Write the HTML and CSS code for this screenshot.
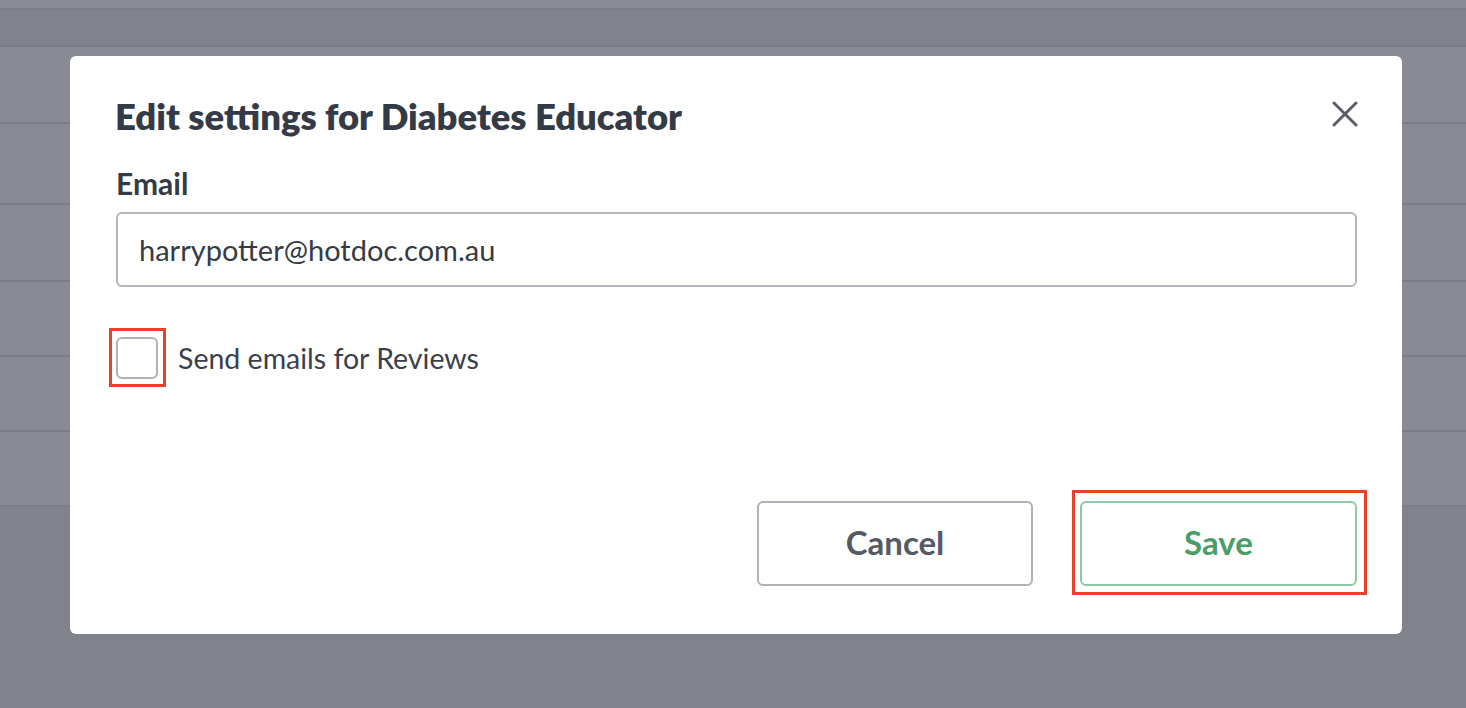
FILE: index.html
```html
<!DOCTYPE html>
<html lang="en">
<head>
<meta charset="utf-8">
<title>Edit settings</title>
<link rel="stylesheet" href="styles.css">
</head>
<body>
<div class="bg">
  <div class="bg-top"></div>
  <div class="bg-head"></div>
  <div class="bg-row r1"></div>
  <div class="bg-row r2"></div>
  <div class="bg-row r3"></div>
  <div class="bg-row r4"></div>
  <div class="bg-row r5"></div>
  <div class="bg-row r6"></div>
  <div class="bg-foot"></div>
</div>
<div class="modal">
  <div class="modal-header">
    <h1 class="title">Edit settings for Diabetes Educator</h1>
    <button class="close" aria-label="Close">
      <svg width="26" height="26" viewBox="0 0 26 26"><path d="M2 2 L24 24 M24 2 L2 24" stroke="#5a5e69" stroke-width="3" stroke-linecap="round" fill="none"/></svg>
    </button>
  </div>
  <label class="label">Email</label>
  <div class="input">harrypotter@hotdoc.com.au</div>
  <div class="check-row">
    <span class="check-hl"><span class="checkbox"></span></span>
    <span class="check-label">Send emails for Reviews</span>
  </div>
  <div class="actions">
    <button class="btn btn-cancel">Cancel</button>
    <span class="save-hl"><button class="btn btn-save">Save</button></span>
  </div>
</div>
</body>
</html>
```
FILE: styles.css
```css
* { box-sizing: border-box; }
html, body { margin: 0; padding: 0; }
body {
  width: 1466px;
  height: 708px;
  overflow: hidden;
  font-family: Lato, "Open Sans", sans-serif;
  background: #80838c;
  position: relative;
}
.bg { display: flex; flex-direction: column; }
.bg-top { height: 10px; background: #898c95; border-bottom: 2px solid #7a7d86; }
.bg-head { height: 37px; background: #80838c; border-bottom: 2px solid #7a7d86; }
.bg-row { background: #888b94; border-bottom: 2px solid #7b7e87; }
.r1 { height: 77px; }
.r2 { height: 81px; }
.r3 { height: 77px; }
.r4 { height: 75px; }
.r5 { height: 75px; }
.r6 { height: 75px; }
.bg-foot { flex: 1; }

.modal {
  position: absolute;
  left: 70px;
  top: 56px;
  width: 1332px;
  height: 578px;
  background: #fff;
  border-radius: 6px;
  padding: 38px 45px 0 46px;
  display: flex;
  flex-direction: column;
  color: #343a46;
}
.modal-header {
  display: flex;
  justify-content: space-between;
  align-items: flex-start;
}
.title {
  margin: 0 0 0 -1px;
  font-size: 36.4px;
  line-height: 44px;
  font-weight: 800;
  color: #343a46;
}
.close {
  border: 0;
  background: none;
  padding: 0;
  margin: 0;
  width: 26px;
  height: 26px;
  margin-top: 7px;
  margin-right: -1px;
  display: flex;
}
.label {
  margin-top: 27px;
  font-size: 30px;
  line-height: 36px;
  font-weight: 700;
  color: #343a46;
}
.input {
  margin-top: 11px;
  height: 75px;
  border: 2px solid #b5b6bb;
  border-radius: 6px;
  padding: 0 21px;
  display: flex;
  align-items: center;
  font-size: 29px;
  color: #353a45;
}
.check-row {
  margin-top: 41px;
  display: flex;
  align-items: center;
  margin-left: -7px;
}
.check-hl {
  border: 3px solid #e8432a;
  padding: 6px 5px 5px 4px;
  display: flex;
}
.checkbox {
  width: 42px;
  height: 42px;
  border: 2px solid #b0b1b6;
  border-radius: 6px;
}
.check-label {
  margin-left: 12px;
  font-size: 28.5px;
  color: #3b404b;
}
.actions {
  margin-top: 103px;
  display: flex;
  justify-content: flex-end;
  align-items: flex-start;
  margin-right: -10px;
}
.btn {
  width: 276px;
  height: 85px;
  background: #fff;
  border-radius: 6px;
  font-family: Lato, "Open Sans", sans-serif;
  font-size: 33px;
  font-weight: 700;
  padding: 0 0 4px 0;
  display: block;
}
.btn-cancel {
  border: 2px solid #b0b1b6;
  color: #555a64;
  margin-top: 11px;
  margin-right: 39px;
}
.save-hl {
  border: 3px solid #e8432a;
  padding: 8px 7px 6px 5px;
  display: flex;
}
.btn-save {
  border: 2px solid #8ccaa4;
  color: #4a9d69;
  width: 277px;
}
```
